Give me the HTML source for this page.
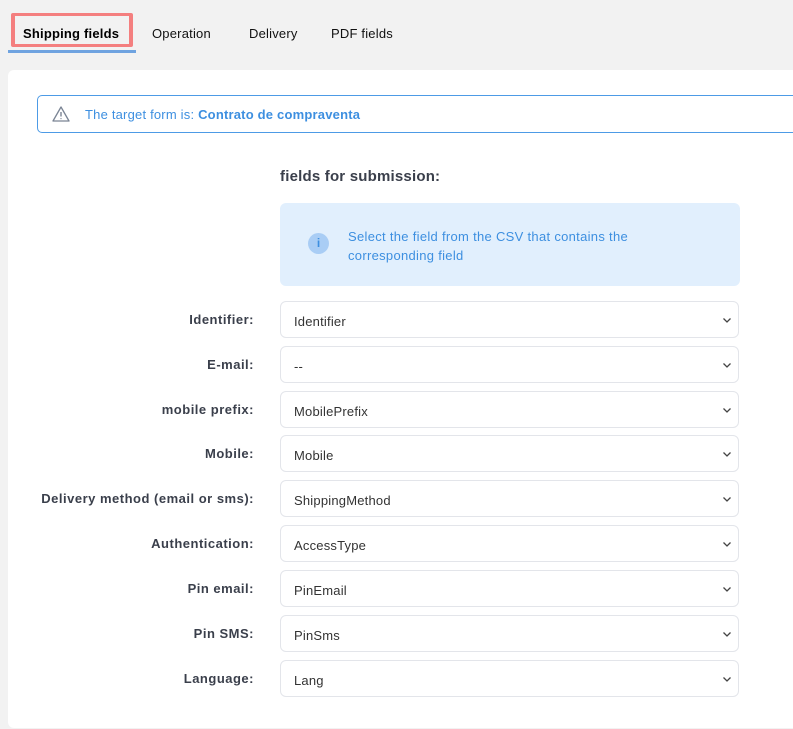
<!DOCTYPE html>
<html><head><style>
body{margin:0;width:793px;height:729px;background:#f2f2f2;font-family:"Liberation Sans",sans-serif;position:relative;overflow:hidden}
.tab{position:absolute;top:26px;font-size:13px;color:#111;letter-spacing:.2px}
.card{position:absolute;left:8px;top:70px;width:800px;height:658px;background:#fff;border-radius:6px}
.alert{position:absolute;left:37px;top:95px;width:770px;height:38px;border:1px solid #4d9be6;border-radius:5px;box-sizing:border-box}
.alert span{position:absolute;left:47px;top:11px;font-size:13px;color:#3d8fe0;letter-spacing:.2px}
h3{position:absolute;left:280px;top:168px;margin:0;font-size:15px;color:#3a3f4b;letter-spacing:.2px}
.info{position:absolute;left:280px;top:203px;width:460px;height:83px;background:#e1effd;border-radius:6px}
.info .t{position:absolute;left:68px;top:24px;font-size:13px;line-height:19px;color:#3d8fe0;letter-spacing:.3px}
.info .i{position:absolute;left:28px;top:30px;width:21px;height:21px;border-radius:50%;background:#a9cdf5;color:#3d8fe0;font-size:12px;font-weight:bold;text-align:center;line-height:21px}
.lab{position:absolute;right:539px;font-size:13px;font-weight:bold;color:#3a3f4b;white-space:nowrap;letter-spacing:.5px}
.sel{position:absolute;left:280px;width:459px;height:37px;border:1.5px solid #e3e5ea;border-radius:6px;box-sizing:border-box;font-size:13px;color:#333;padding:12px 0 0 13px;letter-spacing:.2px}
.sel svg{position:absolute;right:6px;top:15px}
</style></head><body>
<div style="position:absolute;left:11px;top:13px;width:122px;height:34px;background:#f47f7f;border-radius:2px"></div>
<div style="position:absolute;left:15px;top:16px;width:114px;height:28px;background:#f2f2f2"></div>
<div style="position:absolute;left:8px;top:50px;width:128px;height:3px;background:#6fa3e0"></div>
<div class="tab" style="left:23px;font-weight:bold;color:#000">Shipping fields</div>
<div class="tab" style="left:152px">Operation</div>
<div class="tab" style="left:249px">Delivery</div>
<div class="tab" style="left:331px">PDF fields</div>
<div class="card"></div>
<div class="alert"><svg style="position:absolute;left:13px;top:9px" width="20" height="18" viewBox="0 0 20 18"><path d="M10 2 L18 16 H2 Z" fill="none" stroke="#7a8494" stroke-width="1.3" stroke-linejoin="round"/><path d="M10 7v4.5M10 13.3v.8" stroke="#7a8494" stroke-width="1.4"/></svg><span>The target form is: <b>Contrato de compraventa</b></span></div>
<h3>fields for submission:</h3>
<div class="info"><div class="i">i</div><div class="t">Select the field from the CSV that contains the<br>corresponding field</div></div>
<div class="lab" style="top:312px">Identifier:</div><div class="sel" style="top:301px">Identifier<svg width="10" height="7"><path d="M1.5 1.5l3.5 3.5 3.5-3.5" fill="none" stroke="#444" stroke-width="1.3"/></svg></div>
<div class="lab" style="top:357px">E-mail:</div><div class="sel" style="top:346px">--<svg width="10" height="7"><path d="M1.5 1.5l3.5 3.5 3.5-3.5" fill="none" stroke="#444" stroke-width="1.3"/></svg></div>
<div class="lab" style="top:402px">mobile prefix:</div><div class="sel" style="top:391px">MobilePrefix<svg width="10" height="7"><path d="M1.5 1.5l3.5 3.5 3.5-3.5" fill="none" stroke="#444" stroke-width="1.3"/></svg></div>
<div class="lab" style="top:446px">Mobile:</div><div class="sel" style="top:435px">Mobile<svg width="10" height="7"><path d="M1.5 1.5l3.5 3.5 3.5-3.5" fill="none" stroke="#444" stroke-width="1.3"/></svg></div>
<div class="lab" style="top:491px">Delivery method (email or sms):</div><div class="sel" style="top:480px">ShippingMethod<svg width="10" height="7"><path d="M1.5 1.5l3.5 3.5 3.5-3.5" fill="none" stroke="#444" stroke-width="1.3"/></svg></div>
<div class="lab" style="top:536px">Authentication:</div><div class="sel" style="top:525px">AccessType<svg width="10" height="7"><path d="M1.5 1.5l3.5 3.5 3.5-3.5" fill="none" stroke="#444" stroke-width="1.3"/></svg></div>
<div class="lab" style="top:581px">Pin email:</div><div class="sel" style="top:570px">PinEmail<svg width="10" height="7"><path d="M1.5 1.5l3.5 3.5 3.5-3.5" fill="none" stroke="#444" stroke-width="1.3"/></svg></div>
<div class="lab" style="top:626px">Pin SMS:</div><div class="sel" style="top:615px">PinSms<svg width="10" height="7"><path d="M1.5 1.5l3.5 3.5 3.5-3.5" fill="none" stroke="#444" stroke-width="1.3"/></svg></div>
<div class="lab" style="top:671px">Language:</div><div class="sel" style="top:660px">Lang<svg width="10" height="7"><path d="M1.5 1.5l3.5 3.5 3.5-3.5" fill="none" stroke="#444" stroke-width="1.3"/></svg></div>
</body></html>
